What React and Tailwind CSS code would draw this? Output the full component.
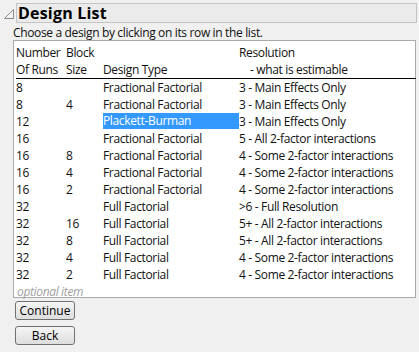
import React from "react";

const rows = [
  ["8", "", "Fractional Factorial", "3 - Main Effects Only"],
  ["8", "4", "Fractional Factorial", "3 - Main Effects Only"],
  ["12", "", "Plackett-Burman", "3 - Main Effects Only"],
  ["16", "", "Fractional Factorial", "5 - All 2-factor interactions"],
  ["16", "8", "Fractional Factorial", "4 - Some 2-factor interactions"],
  ["16", "4", "Fractional Factorial", "4 - Some 2-factor interactions"],
  ["16", "2", "Fractional Factorial", "4 - Some 2-factor interactions"],
  ["32", "", "Full Factorial", ">6 - Full Resolution"],
  ["32", "16", "Full Factorial", "5+ - All 2-factor interactions"],
  ["32", "8", "Full Factorial", "5+ - All 2-factor interactions"],
  ["32", "4", "Full Factorial", "4 - Some 2-factor interactions"],
  ["32", "2", "Full Factorial", "4 - Some 2-factor interactions"],
];

const cols = "grid grid-cols-[50px_37px_136px_1fr]";

const Button = ({ children }) => (
  <button className="w-[60px] h-[19px] rounded-[3px] border border-[#707070] bg-gradient-to-b from-[#f6f6f6] to-[#dddddd] text-[12px] text-black leading-none">
    {children}
  </button>
);

export default function App() {
  return (
    <div className="w-[419px] h-[352px] bg-[#f0f0f0] font-['Open_Sans',sans-serif] text-[12px] text-[#111] overflow-hidden">
      <div className="flex items-center pt-[3px] pl-[4px] pr-[2px]">
        <svg width="10" height="10" viewBox="0 0 10 10" className="mr-[2px] mt-[2px]">
          <path d="M0.5 9.5 L9.5 0.5 L9.5 9.5 Z" fill="#f4f4f4" stroke="#8a8a8a" strokeWidth="1" />
        </svg>
        <div className="flex-1 h-[20px] border border-[#c4c4c4] bg-[#ebebeb] pl-[1px] flex items-center">
          <span className="text-[16px] font-bold text-black leading-none tracking-[0.2px]">Design List</span>
        </div>
      </div>
      <div className="pl-[13px] pr-[3px] tracking-[-0.35px]">
        <div className="h-[17px] leading-[17px] pt-[1px]">
          Choose a design by clicking on its row in the list.
        </div>
        <div className="h-[258px] border border-[#a9a9a9] bg-white pl-[2px] pt-[3px] leading-[17px]">
          <div className="border-b border-black mr-[-1px]">
            <div className={cols}>
              <span>Number</span>
              <span>Block</span>
              <span></span>
              <span>Resolution</span>
            </div>
            <div className={cols}>
              <span>Of Runs</span>
              <span>Size</span>
              <span>Design Type</span>
              <span className="pl-[11px]">- what is estimable</span>
            </div>
          </div>
          {rows.map((r, i) => (
            <div key={i} className={cols + " h-[17px]"}>
              <span>{r[0]}</span>
              <span>{r[1]}</span>
              <span className={i === 2 ? "bg-[#3399ff] text-white h-[16px] leading-[16px]" : ""}>{r[2]}</span>
              <span>{r[3]}</span>
            </div>
          ))}
          <div className="italic text-[#a0a0a0] pl-[1px]">optional item</div>
        </div>
        <div className="flex flex-col gap-[6px] pt-[3px] pl-[2px] tracking-normal">
          <Button>Continue</Button>
          <Button>Back</Button>
        </div>
      </div>
    </div>
  );
}
